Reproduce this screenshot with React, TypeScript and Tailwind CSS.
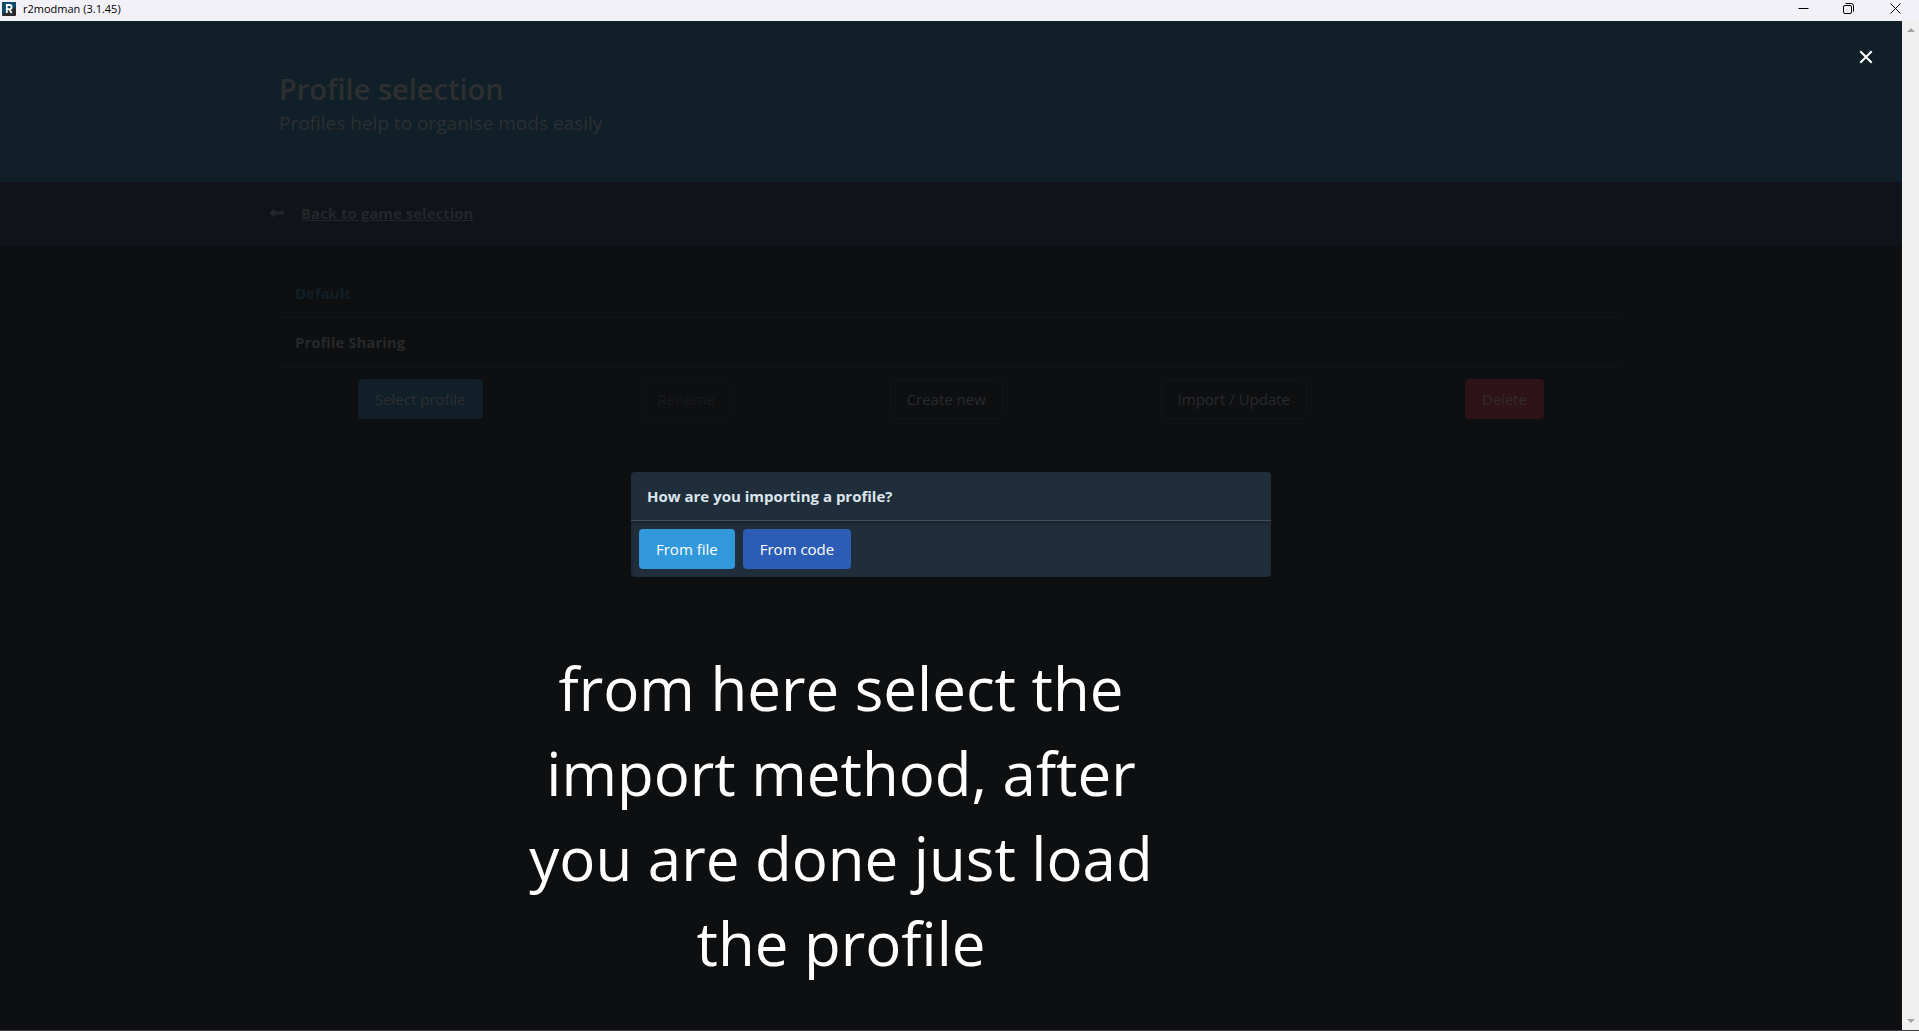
import React from "react";

const actionBase = "h-10 rounded border px-4 text-[15px] leading-6 whitespace-nowrap";

const actions = [
  { label: "Select profile", className: "border-transparent bg-[#101f28] text-[#2d2f31]" },
  { label: "Rename", className: "border-[#101214] text-[#191b1d]" },
  { label: "Create new", className: "border-[#121416] text-[#292b2d]" },
  { label: "Import / Update", className: "border-[#121416] text-[#292b2d]" },
  { label: "Delete", className: "border-transparent bg-[#2d1318] text-[#332a2c]" },
];

function AppLogo() {
  return (
    <svg width="14" height="14" viewBox="0 0 14 14" aria-hidden="true">
      <rect width="14" height="14" rx="1" fill="#2b2b2f" />
      <path d="M0 1a1 1 0 0 1 1-1h12a1 1 0 0 1 1 1v4L0 12z" fill="#0d4a6b" />
      <path d="M4.800 11V3h2.700a2.100 2.100 0 0 1 0 4.200H5M7.300 7.200L9.600 11" fill="none" stroke="#fff" strokeWidth="1.8" />
    </svg>
  );
}

function TitleBar() {
  return (
    <header className="flex h-[21px] shrink-0 items-start justify-between bg-[#f3f1f8] text-black">
      <div className="flex items-center gap-[7px] pl-0.5 pt-px">
        <AppLogo />
        <span className="text-[11px] leading-4">r2modman (3.1.45)</span>
      </div>
      <div className="flex">
        <button aria-label="Minimize" className="flex h-4 w-[46px] items-center justify-center">
          <svg width="11" height="11" viewBox="0 0 11 11" stroke="currentColor" fill="none">
            <path d="M.5 5.500h10" />
          </svg>
        </button>
        <button aria-label="Restore" className="flex h-4 w-[45px] items-center justify-center">
          <svg width="11" height="11" viewBox="0 0 11 11" stroke="currentColor" fill="none">
            <rect x=".5" y="2.5" width="8" height="8" rx="1.5" />
            <path d="M2.500.5H8A2.500 2.500 0 0 1 10.500 3v5.500" />
          </svg>
        </button>
        <button aria-label="Close window" className="flex h-4 w-12 items-center justify-center">
          <svg width="11" height="11" viewBox="0 0 11 11" stroke="currentColor" fill="none">
            <path d="M.5.5l10 10M10.500.5l-10 10" />
          </svg>
        </button>
      </div>
    </header>
  );
}

function Scrollbar() {
  return (
    <div className="flex w-[17px] shrink-0 flex-col items-center justify-between bg-[#f0f0f0] py-[7px]" aria-hidden="true">
      <svg width="8" height="4" viewBox="0 0 8 4" fill="#a3a3a3"><path d="M0 4l4-4 4 4z" /></svg>
      <svg width="8" height="4" viewBox="0 0 8 4" fill="#a3a3a3"><path d="M0 0l4 4 4-4z" /></svg>
    </div>
  );
}

function ProfilePage() {
  return (
    <main>
      <section className="h-[161px] bg-[#101f28] pt-12 text-[#2d2f31]">
        <div className="mx-auto max-w-[1344px]">
          <h1 className="text-[29px] font-semibold leading-10">Profile selection</h1>
          <p className="text-[19px] leading-7">Profiles help to organise mods easily</p>
        </div>
      </section>
      <nav className="h-16 bg-[#10131a] pt-[18px]">
        <div className="mx-auto max-w-[1344px]">
          <a href="#games" className="-ml-2.5 inline-flex items-center gap-4 text-[15px] font-bold leading-6 text-[#24272a]">
            <svg width="16" height="10" viewBox="0 0 16 10" fill="currentColor" aria-hidden="true">
              <path d="M5.600 1.400v2.100h8.800a.6.6 0 0 1 .6.6v1.800a.6.6 0 0 1-.6.6H5.600v2.100a.7.7 0 0 1-1.200.5L1.200 5.600a.8.8 0 0 1 0-1.200L4.400.9a.7.7 0 0 1 1.200.5z" />
            </svg>
            <span className="underline">Back to game selection</span>
          </a>
        </div>
      </nav>
      <section className="mx-auto max-w-[1344px] pt-[23px] text-[15px] font-bold leading-6">
        <div className="border-b border-[#121416] px-4 py-3 text-[#101f28]">Default</div>
        <div className="border-b border-[#121416] px-4 py-3 text-[#26282a]">Profile Sharing</div>
        <div className="flex justify-around pt-3 font-normal">
          {actions.map((a) => (
            <button key={a.label} className={`${actionBase} ${a.className}`}>{a.label}</button>
          ))}
        </div>
      </section>
    </main>
  );
}

function ImportDialog() {
  return (
    <div className="absolute inset-0 flex items-center justify-center pb-0.5">
      <div role="dialog" aria-labelledby="import-title" className="w-[640px] overflow-hidden rounded bg-[#202d3a]">
        <h2 id="import-title" className="border-b border-[#434e58] px-4 py-3 text-[15px] font-bold leading-6 text-[#dbe5ed]">
          How are you importing a profile?
        </h2>
        <div className="flex gap-2 p-2 shadow-[inset_0_2px_3px_rgba(10,10,10,0.25)]">
          <button className="h-10 rounded bg-[#3298dc] px-[17px] text-[15px] text-white">From file</button>
          <button className="h-10 rounded bg-[#2c5db6] px-[17px] text-[15px] text-white">From code</button>
        </div>
      </div>
      <button aria-label="Close" className="absolute right-5 top-5 flex size-8 items-center justify-center text-white">
        <svg width="14" height="14" viewBox="0 0 14 14" stroke="currentColor" strokeWidth="2" fill="none">
          <path d="M1.300 1.300l11.400 11.400M12.700 1.300L1.300 12.700" />
        </svg>
      </button>
    </div>
  );
}

export default function App() {
  return (
    <div className="flex h-screen flex-col border-b border-[#3d3d42] bg-[#0e0f11] font-['Open_Sans',sans-serif]">
      <TitleBar />
      <div className="flex min-h-0 flex-1">
        <div className="relative min-w-0 flex-1 overflow-hidden">
          <ProfilePage />
          <ImportDialog />
          <p className="absolute left-[501px] top-[625px] w-[680px] text-center text-[60px] leading-[85px] text-white">
            from here select the import method, after you are done just load the profile
          </p>
        </div>
        <Scrollbar />
      </div>
    </div>
  );
}
